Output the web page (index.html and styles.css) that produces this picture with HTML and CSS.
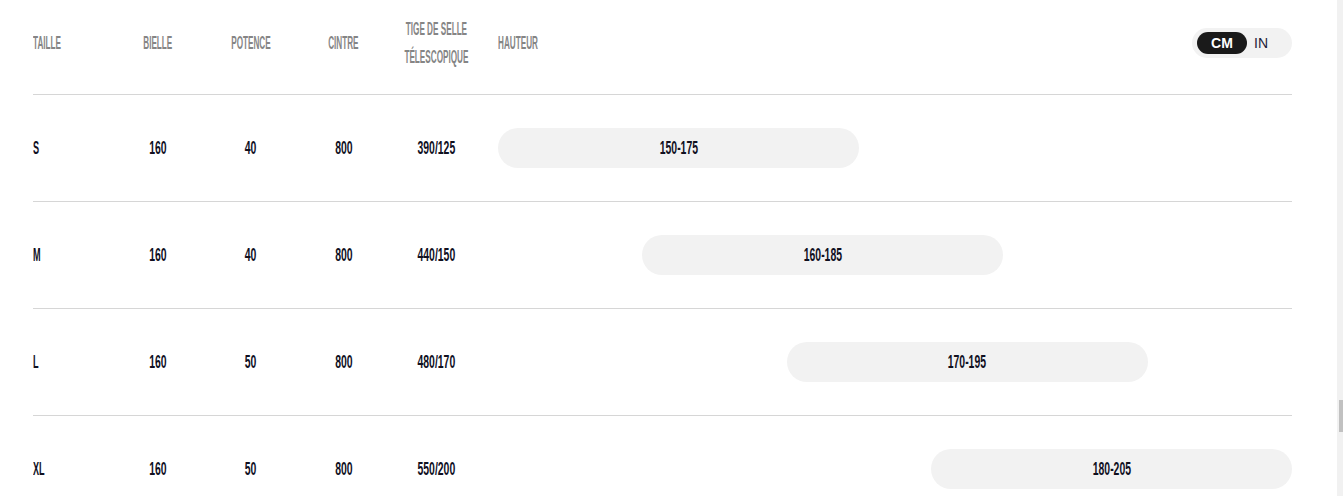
FILE: index.html
```html
<!DOCTYPE html>
<html lang="fr">
<head>
<meta charset="utf-8">
<title>Tailles</title>
<link rel="stylesheet" href="styles.css">
</head>
<body>
<div class="page">
  <div class="table">
    <div class="row head">
      <div class="cell left"><span class="sq hd">TAILLE</span></div>
      <div class="cell"><span class="sq hd">BIELLE</span></div>
      <div class="cell"><span class="sq hd">POTENCE</span></div>
      <div class="cell"><span class="sq hd">CINTRE</span></div>
      <div class="cell"><span class="sq hd two">TIGE DE SELLE<br>TÉLESCOPIQUE</span></div>
      <div class="cell range head-range">
        <span class="sq hd">HAUTEUR</span>
        <div class="toggle">
          <button class="unit active">CM</button>
          <button class="unit">IN</button>
        </div>
      </div>
    </div>

    <div class="row">
      <div class="cell left"><span class="sq sz">S</span></div>
      <div class="cell"><span class="sq dt">160</span></div>
      <div class="cell"><span class="sq dt">40</span></div>
      <div class="cell"><span class="sq dt">800</span></div>
      <div class="cell"><span class="sq dt">390/125</span></div>
      <div class="cell range"><div class="pill" style="margin-left:0%;width:45.4545%"><span class="sq dt">150-175</span></div></div>
    </div>

    <div class="row">
      <div class="cell left"><span class="sq sz">M</span></div>
      <div class="cell"><span class="sq dt">160</span></div>
      <div class="cell"><span class="sq dt">40</span></div>
      <div class="cell"><span class="sq dt">800</span></div>
      <div class="cell"><span class="sq dt">440/150</span></div>
      <div class="cell range"><div class="pill" style="margin-left:18.1818%;width:45.4545%"><span class="sq dt">160-185</span></div></div>
    </div>

    <div class="row">
      <div class="cell left"><span class="sq sz">L</span></div>
      <div class="cell"><span class="sq dt">160</span></div>
      <div class="cell"><span class="sq dt">50</span></div>
      <div class="cell"><span class="sq dt">800</span></div>
      <div class="cell"><span class="sq dt">480/170</span></div>
      <div class="cell range"><div class="pill" style="margin-left:36.3636%;width:45.4545%"><span class="sq dt">170-195</span></div></div>
    </div>

    <div class="row">
      <div class="cell left"><span class="sq sz">XL</span></div>
      <div class="cell"><span class="sq dt">160</span></div>
      <div class="cell"><span class="sq dt">50</span></div>
      <div class="cell"><span class="sq dt">800</span></div>
      <div class="cell"><span class="sq dt">550/200</span></div>
      <div class="cell range"><div class="pill" style="margin-left:54.5454%;width:45.4545%"><span class="sq dt">180-205</span></div></div>
    </div>
  </div>
</div>
<div class="scrollbar" aria-hidden="true"><div class="thumb"></div></div>
</body>
</html>
```
FILE: styles.css
```css
html, body {
  margin: 0;
  padding: 0;
  background: #ffffff;
  overflow: hidden;
}

body {
  font-family: "Liberation Sans", Arial, sans-serif;
}

.page {
  padding: 0 51px 0 33px;
}

.row {
  display: grid;
  grid-template-columns: 78px 93px 93px 93px 93px 1fr;
  align-items: center;
  height: 106px;
  border-top: 1px solid #d6d6d6;
}

.row.head {
  box-sizing: border-box;
  height: 94px;
  padding-bottom: 8px;
  border-top: none;
}

.cell {
  display: flex;
  justify-content: center;
  align-items: center;
  white-space: nowrap;
}

.cell.left {
  justify-content: flex-start;
}

.cell.range {
  justify-content: flex-start;
  padding-left: 15px;
}

.cell.head-range {
  justify-content: space-between;
}

.sq {
  display: inline-block;
  flex: none;
  font-size: 19px;
  font-weight: 700;
  line-height: 22px;
}

.hd {
  color: #858585;
  transform: scaleX(0.43);
  transform-origin: center center;
}

.cell.left .hd,
.cell.range .hd {
  transform-origin: left center;
}

.hd.two {
  line-height: 28px;
  text-align: center;
}

.dt {
  color: #10101f;
  transform: scaleX(0.55);
  transform-origin: center center;
}

.sz {
  color: #10101f;
  transform: scaleX(0.48);
  transform-origin: left center;
}

.pill {
  box-sizing: border-box;
  flex: none;
  height: 40px;
  border-radius: 20px;
  background: #f2f2f2;
  display: flex;
  align-items: center;
  justify-content: center;
}

.toggle {
  box-sizing: border-box;
  width: 100px;
  height: 30px;
  padding: 4px 5px;
  border-radius: 15px;
  background: #f2f2f2;
  display: flex;
  align-items: center;
}

.unit {
  border: none;
  background: transparent;
  font-family: "Liberation Sans", Arial, sans-serif;
  font-size: 14px;
  line-height: 22px;
  height: 22px;
  padding: 0 7px;
  color: #1c1c3a;
  cursor: pointer;
}

.unit.active {
  width: 50px;
  padding: 0;
  border-radius: 11px;
  background: #1a1a1a;
  color: #ffffff;
  font-weight: 700;
}

.scrollbar {
  position: fixed;
  top: 0;
  right: 0;
  width: 6px;
  height: 100%;
  background: #f1f1f1;
}

.thumb {
  position: absolute;
  top: 400px;
  right: 0;
  width: 4px;
  height: 32px;
  background: #c1c1c1;
}
```
